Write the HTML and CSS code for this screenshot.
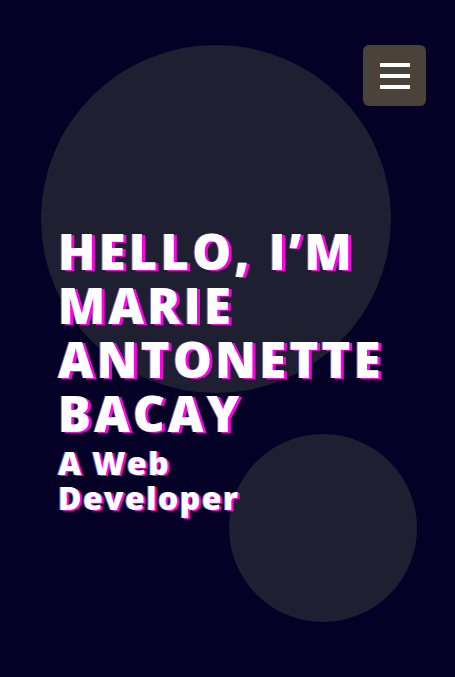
FILE: index.html
```html
<!DOCTYPE html>
<html>
<head>
<meta charset="utf-8">
<link rel="stylesheet" href="styles.css">
</head>
<body>
<div class="page">
  <div class="blob blob-big"></div>
  <div class="blob blob-small"></div>
  <button class="menu-btn" aria-label="Menu">
    <span class="bar"></span><span class="bar"></span><span class="bar"></span>
  </button>
  <main class="hero">
    <h1 class="title">HELLO, I’M MARIE ANTONETTE BACAY</h1>
    <h2 class="subtitle"><span class="line">A Web</span><span class="line">Developer</span></h2>
  </main>
</div>
</body>
</html>
```
FILE: styles.css
```css
html, body {
  margin: 0;
  padding: 0;
  background: #050025;
}
.page {
  position: relative;
  width: 455px;
  height: 677px;
  overflow: hidden;
  background: #050025;
  font-family: "Open Sans", "DejaVu Sans", sans-serif;
}
.blob {
  position: absolute;
  border-radius: 50%;
  background: #1e1f30;
}
.blob-big {
  left: 41px;
  top: 45px;
  width: 350px;
  height: 348px;
}
.blob-small {
  left: 229px;
  top: 434px;
  width: 188px;
  height: 188px;
}
.menu-btn {
  position: absolute;
  left: 363px;
  top: 45px;
  width: 63px;
  height: 61px;
  border: 0;
  border-radius: 6px;
  background: #4b4339;
  display: flex;
  flex-direction: column;
  align-items: center;
  justify-content: center;
  gap: 7px;
  padding: 0;
}
.bar {
  display: block;
  width: 30px;
  height: 4px;
  background: #fff;
}
.hero {
  position: relative;
  padding: 224px 0 0 58px;
}
.title {
  margin: 0;
  width: 360px;
  color: #fff;
  font-size: 49px;
  font-weight: 800;
  line-height: 54px;
  letter-spacing: 3.2px;
  text-shadow: 3px 1px #ff00e6, -1px 0 #6a6ac0;
}
.subtitle {
  margin: 5px 0 0;
  display: flex;
  flex-direction: column;
  color: #fff;
  font-size: 32px;
  font-weight: 800;
  line-height: 35px;
  letter-spacing: 1.4px;
  text-shadow: 2px 1px #ff00e6, -1px 0 #6a6ac0;
}
.line {
  display: block;
}
```
